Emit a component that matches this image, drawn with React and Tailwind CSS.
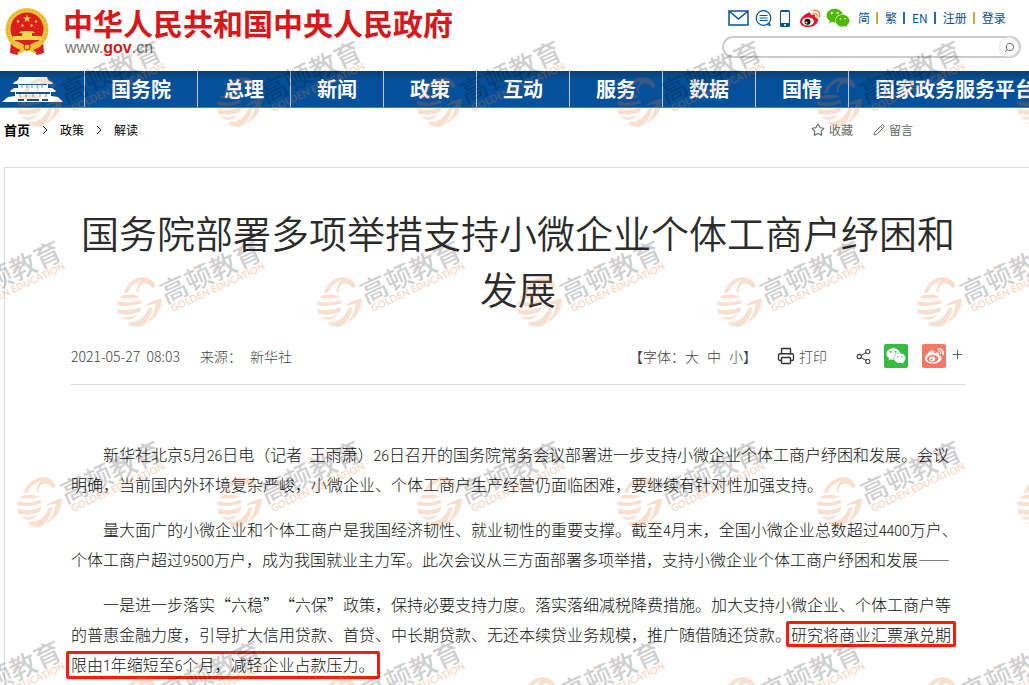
import { Pencil, Plus, Printer, Search, Share2, Star } from 'lucide-react';
import { FaWeibo, FaWeixin } from 'react-icons/fa6';

const NAV_ITEMS = ['国务院', '总理', '新闻', '政策', '互动', '服务', '数据', '国情', '国家政务服务平台'];

const LANG_LINKS = [
  { label: '简', divider: 'bg-[#d9a441]' },
  { label: '繁', divider: 'bg-[#1f6cab]' },
  { label: 'EN', divider: 'bg-[#1f6cab]' },
  { label: '注册', divider: 'bg-[#d9a441]' },
  { label: '登录', divider: null },
];

function Emblem() {
  return (
    <svg viewBox="0 0 44 48" className="h-12 w-11 shrink-0" aria-hidden="true">
      <path d="M6 33 L5 45 L12 47 L16 42 L28 42 L32 47 L39 45 L38 33Z" fill="#d8201c" />
      <circle cx="22" cy="21.500" r="21.500" fill="#eec23c" />
      <circle cx="22" cy="21.500" r="19.500" fill="none" stroke="#d99a22" strokeWidth="1" strokeDasharray="2 2" />
      <circle cx="22" cy="21" r="16.500" fill="#dc1f1b" />
      <path d="M22 6.500l1 2.900h3l-2.400 1.800.9 2.900-2.500-1.800-2.500 1.800.9-2.900-2.400-1.800h3z" fill="#f7d64a" />
      <g fill="#f7d64a">
        <circle cx="13" cy="13.500" r="1.300" />
        <circle cx="31" cy="13.500" r="1.300" />
        <circle cx="17.500" cy="17.500" r="1.200" />
        <circle cx="26.500" cy="17.500" r="1.200" />
        <path d="M16 23h12l2 2H14z M17 25h10v3H17z M8 28h28v4H8z" />
      </g>
      <path d="M7 33c7 0 10 2 15 6 5-4 8-6 15-6l-4 6-6 2 5 4h-4l-6-4-6 4h-4l5-4-6-2z" fill="#eec23c" />
      <path d="M14 34h16l-8 4z" fill="#dc1f1b" />
      <circle cx="22" cy="39" r="3" fill="#eec23c" stroke="#d8201c" />
    </svg>
  );
}

function GateIcon() {
  return (
    <svg viewBox="0 0 62 28" className="h-7 w-[62px]" fill="#fff" aria-hidden="true">
      <path d="M17 2h28l1 3 5 3-1 1H12l-1-1 5-3z" />
      <path d="M16 9h30v4H16z" />
      <path d="M12 13h38l4 3-1 1H9l-1-1z" />
      <path d="M13 17h36v7H13z" />
      <path d="M6 22l7-1h36l7 1 5 5H0z" />
      <path d="M17 9h28v1H17z M14 17h34v2H14z M16 24h6v2h-6z M25 24h12v2H25z M40 24h6v2h-6z" fill="#17538b" />
      <path d="M20 10v3M25 10v3M30 10v3M35 10v3M40 10v3M18 19v3M24 19v3M31 19v3M38 19v3M44 19v3" stroke="#6f97bb" />
    </svg>
  );
}

function PhoneIcon() {
  return (
    <svg viewBox="0 0 10 17" className="h-[17px] w-2.5" aria-hidden="true">
      <rect width="10" height="17" rx="1.500" fill="#0b5299" />
      <rect x="1" y="2" width="8" height="11" fill="#fff" />
      <circle cx="5" cy="15" r="1" fill="#fff" />
    </svg>
  );
}

function WeiboColorIcon() {
  return (
    <svg viewBox="0 0 22 18" className="h-[18px] w-[22px]" aria-hidden="true">
      <path d="M8 4c2-1 3 0 3 2 3-1 5 0 4 2 3 1 4 3 2 6-2 3-6 4-9 4-4 0-8-2-8-5 0-4 5-8 8-9z" fill="#e6162d" />
      <ellipse cx="8" cy="12.500" rx="6" ry="4" fill="#fff" />
      <circle cx="7.500" cy="12.800" r="3" fill="#111" />
      <circle cx="6.500" cy="13.500" r="1" fill="#fff" />
      <path d="M13.500 1.500c4-1 7 2 6 6M13.500 4.500c3-.5 4 1 3.500 3" fill="none" stroke="#f08a3c" strokeWidth="1.500" strokeLinecap="round" />
    </svg>
  );
}

function TopTools() {
  return (
    <div className="flex shrink-0 flex-col pr-2 pt-2">
      <div className="flex h-5 items-center pl-1.5">
        <a href="#mail" aria-label="邮箱">
          <svg viewBox="0 0 21 16" className="h-4 w-[21px]" fill="none" stroke="#0b5299" strokeWidth="1.500" aria-hidden="true">
            <path d="M1 1h19v14H1zM1 1l9.500 8L20 1" />
          </svg>
        </a>
        <a href="#message" aria-label="消息" className="ml-1.5">
          <svg viewBox="0 0 17 17" className="size-[17px]" fill="none" stroke="#0b5299" strokeWidth="1.200" aria-hidden="true">
            <circle cx="8.500" cy="8" r="7.300" />
            <path d="M12 14.500l3 .8-.7-3M4.500 5.500h8M4.500 8h8M4.500 10.500h8" />
          </svg>
        </a>
        <a href="#mobile" aria-label="手机版" className="ml-2"><PhoneIcon /></a>
        <a href="#weibo" aria-label="微博" className="ml-2.5"><WeiboColorIcon /></a>
        <a href="#weixin" aria-label="微信" className="ml-1 text-[#4fb800]"><FaWeixin size={24} /></a>
        <div className="ml-2 flex items-center gap-[7px] text-xs text-[#0b5299]">
          {LANG_LINKS.map((link) => (
            <div key={link.label} className="flex items-center gap-1.5">
              <a href="#lang">{link.label}</a>
              {link.divider && <span className={`h-3 w-0.5 ${link.divider}`} />}
            </div>
          ))}
        </div>
      </div>
      <div className="mt-2 flex h-[22px] w-[299px] items-center rounded-full border-2 border-[#ccc] bg-white">
        <input aria-label="搜索" type="text" className="min-w-0 flex-1 bg-transparent px-3 text-xs outline-none" />
        <button type="button" aria-label="搜索" className="flex size-5 items-center justify-center rounded-full border border-[#e4e4e4] bg-[#fafafa] text-[#666]">
          <Search size={11} className="-scale-x-100" />
        </button>
      </div>
    </div>
  );
}

function NavBar() {
  return (
    <nav className="flex h-[37px] overflow-hidden border-b border-[#4a83b3] bg-linear-to-b from-[#0b3f6d] via-[#05509a] via-25% to-[#05509a]">
      <a href="#home" aria-label="首页" className="flex w-[84px] shrink-0 items-center pl-0.5"><GateIcon /></a>
      {NAV_ITEMS.map((item) => (
        <a key={item} href="#nav" className="shrink-0 border-l border-[#b9c9d8] px-[26px] text-xl leading-9 font-bold whitespace-nowrap text-white">
          {item}
        </a>
      ))}
    </nav>
  );
}

function Chevron() {
  return (
    <svg viewBox="0 0 6 8" className="mx-3 h-2 w-1.5" fill="none" stroke="#222" aria-hidden="true">
      <path d="M1 0l4 4-4 4" />
    </svg>
  );
}

function Breadcrumb() {
  return (
    <div className="flex h-11 items-center pl-1 text-xs text-black">
      <a href="#home" className="text-[13px] font-bold">首页</a>
      <Chevron />
      <a href="#policy">政策</a>
      <Chevron />
      <a href="#reading">解读</a>
      <div className="mr-29 ml-auto flex gap-5 text-[#666]">
        <button type="button" className="flex items-center gap-1"><Star size={14} strokeWidth={1.8} />收藏</button>
        <button type="button" className="flex items-center gap-1"><Pencil size={12} strokeWidth={2} />留言</button>
      </div>
    </div>
  );
}

function MetaRow() {
  return (
    <div className="mt-7 flex h-[41px] items-start border-b border-[#dcdcdc] text-sm leading-6 font-light text-[#444]">
      <span>2021-05-27&nbsp; 08:03</span>
      <span className="ml-5">来源：</span>
      <span className="ml-2">新华社</span>
      <div className="ml-auto flex items-center">
        <span>【字体：</span>
        <button type="button">大</button>
        <button type="button" className="ml-2">中</button>
        <button type="button" className="ml-2">小</button>
        <span>】</span>
        <button type="button" className="ml-5 flex items-center gap-1">
          <Printer size={18} strokeWidth={1.8} className="text-[#333]" />打印
        </button>
        <a href="#share" aria-label="分享" className="ml-7 text-[#444]"><Share2 size={17} strokeWidth={1.5} /></a>
        <a href="#weixin" aria-label="微信" className="ml-3 flex size-6 items-center justify-center rounded-xs bg-[#37ba42] text-white">
          <FaWeixin size={20} />
        </a>
        <a href="#weibo" aria-label="微博" className="ml-3.5 flex size-6 items-center justify-center rounded-xs bg-[#f77767] text-white">
          <FaWeibo size={19} />
        </a>
        <button type="button" aria-label="更多" className="ml-1 -mt-1"><Plus size={15} strokeWidth={1.3} /></button>
      </div>
    </div>
  );
}

// Numbers are set in a narrower face than the Chinese text around them
function Num({ children }) {
  return <span className="font-[Roboto] text-sm">{children}</span>;
}

function Highlight({ children }) {
  return (
    <mark className="-mx-[5px] inline-block rounded-xs border-3 border-[#fb1d12] bg-transparent px-0.5 leading-5 text-inherit">
      {children}
    </mark>
  );
}

function ArticleBody() {
  return (
    <div className="mt-[54px] space-y-[15px] pr-1 text-base leading-[30px] font-light text-[#111] [&>p]:indent-8 [&_mark]:indent-0">
      <p>
        新华社北京<Num>5</Num>月<Num>26</Num>日电（记者&nbsp; 王雨萧）<Num>26</Num>日召开的国务院常务会议部署进一步支持小微企业个体工商户纾困和发展。会议明确，当前国内外环境复杂严峻，小微企业、个体工商户生产经营仍面临困难，要继续有针对性加强支持。
      </p>
      <p>
        量大面广的小微企业和个体工商户是我国经济韧性、就业韧性的重要支撑。截至<Num>4</Num>月末，全国小微企业总数超过<Num>4400</Num>万户、个体工商户超过<Num>9500</Num>万户，成为我国就业主力军。此次会议从三方面部署多项举措，支持小微企业个体工商户纾困和发展——
      </p>
      <p>
        一是进一步落实“六稳”“六保”政策，保持必要支持力度。落实落细减税降费措施。加大支持小微企业、个体工商户等的普惠金融力度，引导扩大信用贷款、首贷、中长期贷款、无还本续贷业务规模，推广随借随还贷款。<Highlight>研究将商业汇票承兑期</Highlight>
        <Highlight>限由<Num>1</Num>年缩短至<Num>6</Num>个月，减轻企业占款压力。</Highlight>
      </p>
    </div>
  );
}

function Watermark() {
  const marks = [];
  for (let row = 0; row < 4; row += 1) {
    for (let col = -1; col < 12; col += 1) {
      marks.push({ x: col * 200 + (row % 2 === 0 ? 12 : 112), y: row * 200 + 70 });
    }
  }
  return (
    <svg className="pointer-events-none absolute inset-0 h-full w-full" aria-hidden="true">
      <defs>
        <g id="golden-mark">
          <g transform="scale(0.3333)" fill="#e07a35" fillOpacity="0.24">
            <path d="M36 70C42 42 68 21 96 22c18 1 30 12 35 25-3 6-9 8-13 4C108 37 93 38 84 49c-5 6-5 12-3 19-4 0-6-1-8-2 0-12 4-24 14-33C66 39 52 50 49 67c-4 1-9 2-13 3z" />
            <path d="M22 83c4-6 14-9 27-9 15 0 28 1 34 6-18 6-38 8-61 3z" />
            <path d="M16 94c22 6 47 4 69-5 3 5 4 8 3 11-24 8-49 11-72 6z" />
            <path d="M16 117c24 6 49 3 72-6 0 6-2 10-5 14-20 8-43 11-64 6z" />
            <path d="M25 140c18 4 34 2 50-4-8 9-14 12-22 13-12 0-22-3-28-9z" />
            <path d="M98 110c13-13 30-22 52-24-1 29-14 54-36 67-4 3-8 5-12 6 17-15 27-34 29-57-10 1-21 3-33 8z" />
            <path d="M46 156c18 3 36-4 49-17 8-8 12-15 14-24l12-3c-3 22-12 40-27 52-13 10-36 9-48-8z" />
          </g>
          <text x="54" y="34" transform="rotate(-25 54 34)" fill="#000" fillOpacity="0.2" className="text-[27px] font-medium">高顿教育</text>
          <text x="61" y="42" transform="rotate(-25 61 42)" fill="#e07a35" fillOpacity="0.3" className="font-[Lato] text-[10px] font-bold">GOLDEN EDUCATION</text>
        </g>
      </defs>
      {marks.map((mark) => (
        <use key={`${mark.x}-${mark.y}`} href="#golden-mark" x={mark.x} y={mark.y} />
      ))}
    </svg>
  );
}

function App() {
  return (
    <div
      lang="zh-CN"
      className="relative min-h-screen overflow-hidden bg-white font-['Noto_Sans_CJK_SC','Liberation_Sans',sans-serif] [text-spacing-trim:space-all]"
    >
      <header className="flex h-[71px] justify-between pl-[5px]">
        <a href="#home" className="flex items-start pt-2">
          <Emblem />
          <div className="ml-3.5">
            <h1 className="text-[30px] leading-7 font-bold text-[#d7171a]">中华人民共和国中央人民政府</h1>
            <p className="pl-0.5 font-['Liberation_Sans'] text-base leading-6 text-[#777]">
              www.<span className="font-bold text-[#d7171a]">gov</span>.cn
            </p>
          </div>
        </a>
        <TopTools />
      </header>
      <NavBar />
      <Breadcrumb />
      <article className="mt-[15px] ml-1 border-t border-l border-[#ddd] pt-9 pr-16 pl-[66px]">
        <h2 className="text-center text-[38px] leading-14 font-[350] text-[#2b2b2b]">国务院部署多项举措支持小微企业个体工商户纾困和发展</h2>
        <MetaRow />
        <ArticleBody />
      </article>
      <Watermark />
    </div>
  );
}

export default App;
